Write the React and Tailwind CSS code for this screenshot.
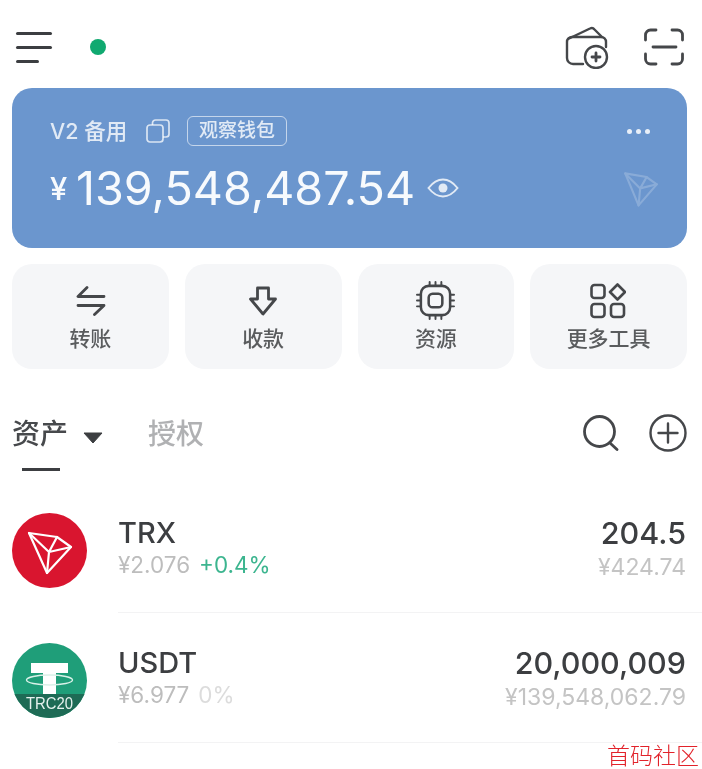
const FONT = { fontFamily: '"Inter","Noto Sans CJK SC",sans-serif' };

const I = "#45474a";

function TronMark({ className, strokeClass, sw }) {
  return (
    <svg viewBox="0 0 42 44" className={className} fill="none" stroke="#fff" strokeWidth={sw} strokeLinejoin="round" strokeLinecap="round">
      <g className={strokeClass}>
        <path d="M1.5 1.5 L28 6 L40.5 15 L18 41 Z" />
        <path d="M1.5 1.5 L20 20 L40.5 15 M20 20 L18 41 M28 6 L20 20" />
      </g>
    </svg>
  );
}

function Transfer() {
  return (
    <svg viewBox="0 0 30 30" className="ml-[2px] w-[30px] h-[30px]" fill="none" stroke={I} strokeWidth="2.8" strokeLinecap="round" strokeLinejoin="round">
      <path d="M11 1.5 L2 10.5 H28" />
      <path d="M2 19.5 H28 L18.5 28.5" />
    </svg>
  );
}
function Receive() {
  return (
    <svg viewBox="0 0 30 30" className="w-[30px] h-[30px]" fill="none" stroke={I} strokeWidth="2.8" strokeLinejoin="round">
      <path d="M9.5 2 H20.5 V13 H27.5 L15 28 L2.5 13 H9.5 Z" />
    </svg>
  );
}
function Chip() {
  return (
    <svg viewBox="0 0 40 40" className="w-[39px] h-[39px]" fill="none" stroke={I} strokeLinecap="round">
      <rect x="5" y="5" width="30" height="30" rx="8" strokeWidth="2.6" />
      <rect x="13" y="13" width="14" height="14" rx="4" strokeWidth="2.6" />
      <path strokeWidth="2" d="M14 1 V5 M20 1 V5 M26 1 V5 M14 35 V39 M20 35 V39 M26 35 V39 M1 14 H5 M1 20 H5 M1 26 H5 M35 14 H39 M35 20 H39 M35 26 H39" />
    </svg>
  );
}
function Grid() {
  return (
    <svg viewBox="0 0 36 36" className="-ml-[2px] w-[36px] h-[36px]" fill="none" stroke={I} strokeWidth="2.6" strokeLinejoin="round">
      <rect x="1.5" y="2" width="13" height="13" rx="3" />
      <rect x="1.5" y="21" width="13" height="13" rx="3" />
      <rect x="21" y="21" width="13" height="13" rx="3" />
      <path d="M27.5 1.5 L35 9 L27.5 16.5 L20 9 Z" />
    </svg>
  );
}

const actions = [
  { label: "转账", icon: <Transfer /> },
  { label: "收款", icon: <Receive /> },
  { label: "资源", icon: <Chip /> },
  { label: "更多工具", icon: <Grid /> },
];

function TrxLogo() {
  return (
    <svg viewBox="0 0 75 75" className="w-[75px] h-[75px] shrink-0">
      <circle cx="37.5" cy="37.5" r="37.5" fill="#d9152f" />
      <g fill="none" stroke="#fff" strokeWidth="2.2" strokeLinejoin="round" strokeLinecap="round">
        <path d="M17 20 L45 24 L59 34 L35 60 Z" />
        <path d="M17 20 L37 39 L59 34 M37 39 L35 60 M45 24 L37 39" />
      </g>
    </svg>
  );
}

function UsdtLogo() {
  return (
    <svg viewBox="0 0 75 75" className="w-[75px] h-[75px] shrink-0">
      <defs>
        <clipPath id="usdt-c"><circle cx="37.5" cy="37.5" r="37.5" /></clipPath>
      </defs>
      <g clipPath="url(#usdt-c)">
        <rect width="75" height="75" fill="#1f9e79" />
        <path d="M19 20 H56 V30 H44 V51 H31 V30 H19 Z" fill="#fff" />
        <ellipse cx="37.5" cy="37" rx="23" ry="5" fill="none" stroke="#d9f1e8" strokeWidth="1.4" />
        <rect y="51" width="75" height="24" fill="#1e6b55" />
        <text x="37.5" y="66" textAnchor="middle" fill="#e6f2ee" fontSize="17" textLength="47" lengthAdjust="spacingAndGlyphs" fontFamily="Liberation Sans, sans-serif">TRC20</text>
      </g>
    </svg>
  );
}

function Row({ logo, name, price, change, changeClass, amount, value }) {
  return (
    <div className="flex h-[130px]">
      <div className="pl-3 pt-[30px] w-[118px] shrink-0">{logo}</div>
      <div className="flex-1 border-b border-[#f3f3f4] pt-[31px] pr-4 flex justify-between">
        <div>
          <div className="text-[29px] leading-[38px] font-medium text-[#3c3e41]">{name}</div>
          <div className="text-[22.5px] leading-[28px] text-[#bdbdbd] -mt-[1px]">
            {price}<span className={`ml-[9px] ${changeClass}`}>{change}</span>
          </div>
        </div>
        <div className="text-right">
          <div className="text-[30.5px] leading-[38px] font-medium text-[#3c3e41]">{amount}</div>
          <div className="text-[23px] leading-[28px] text-[#c4c4c4] mt-[1px]">{value}</div>
        </div>
      </div>
    </div>
  );
}

export default function App() {
  return (
    <div style={FONT} className="relative w-[702px] h-[769px] overflow-hidden bg-white blur-[0.6px]">
      <header className="h-[88px] pl-4 pr-[18px] pt-[6px] flex items-center justify-between">
        <div className="flex items-center">
          <div className="w-[36px] flex flex-col gap-[11px]">
            <div className="h-[3px] w-[36px] rounded-full bg-[#3c3e41]" />
            <div className="h-[3px] w-[36px] rounded-full bg-[#3c3e41]" />
            <div className="h-[3px] w-[23px] rounded-full bg-[#3c3e41]" />
          </div>
          <div className="ml-[38px] w-[16px] h-[16px] rounded-full bg-[#10a970]" />
        </div>
        <div className="flex items-center gap-[34px]">
          <svg viewBox="0 0 46 44" className="w-[46px] h-[44px]" fill="none" stroke={I} strokeWidth="2.4" strokeLinecap="round" strokeLinejoin="round">
            <path d="M19 39 H9 a6 6 0 0 1 -6 -6 V17 a5 5 0 0 1 5 -5 H37 a5 5 0 0 1 5 5 V22" />
            <path d="M4 14 L26 3.5 a3.5 3.5 0 0 1 4.5 1 L38 12" />
            <circle cx="32" cy="32" r="11" />
            <path d="M32 28 V36 M28 32 H36" strokeWidth="2.8" />
          </svg>
          <svg viewBox="0 0 40 38" className="w-[40px] h-[38px]" fill="none" stroke={I} strokeWidth="2.8" strokeLinecap="round">
            <path d="M1.5 12 V7 a5 5 0 0 1 5 -5 H12" />
            <path d="M28 2 H33.5 a5 5 0 0 1 5 5 V12" />
            <path d="M1.5 26 V31 a5 5 0 0 0 5 5 H12" />
            <path d="M28 36 H33.5 a5 5 0 0 0 5 -5 V26" />
            <path d="M9 19 H32" />
          </svg>
        </div>
      </header>

      <section className="mx-3 w-[675px] h-[160px] rounded-[20px] bg-[#6b96ce] pl-[38px] pr-[37px] pt-[28px] text-white">
        <div className="flex items-center h-[30px]">
          <span className="text-[21.5px] leading-[30px] font-medium text-white/80 w-[96px]">V2 备用</span>
          <svg viewBox="0 0 24 24" className="w-[24px] h-[24px]" fill="none" stroke="#fff" strokeOpacity="0.75" strokeWidth="1.7" strokeLinejoin="round">
            <rect x="1" y="6" width="16" height="17" rx="3" />
            <path d="M6.5 6 V4 a3 3 0 0 1 3 -3 H20 a3 3 0 0 1 3 3 V15 a3 3 0 0 1 -3 3 H17" />
          </svg>
          <span className="ml-[17px] w-[100px] h-[30px] rounded-[6px] border border-white/60 flex items-center justify-center text-[19px] font-medium text-white/80">观察钱包</span>
          <div className="ml-auto flex gap-[4px]">
            <span className="w-[5px] h-[5px] rounded-full bg-white/85" />
            <span className="w-[5px] h-[5px] rounded-full bg-white/85" />
            <span className="w-[5px] h-[5px] rounded-full bg-white/85" />
          </div>
        </div>
        <div className="flex items-center h-[56px] mt-[14px]">
          <span className="text-[31px] leading-none font-medium text-white/95 w-[26px]">¥</span>
          <span className="text-[46.7px] leading-none text-white/95">139,548,487.54</span>
          <svg viewBox="0 0 32 20" className="ml-[12px] w-[32px] h-[20px]" fill="none" stroke="#fff" strokeOpacity="0.8" strokeWidth="2">
            <path d="M1.5 10 C7 3 11 1.5 16 1.5 S25 3 30.5 10 C25 17 21 18.5 16 18.5 S7 17 1.5 10 Z" />
            <circle cx="16" cy="10" r="4.5" fill="#fff" fillOpacity="0.8" stroke="none" />
          </svg>
          <TronMark className="ml-auto -mr-[8px] mt-[3px] w-[34px] h-[36px]" strokeClass="opacity-20" sw={2.6} />
        </div>
      </section>

      <div className="mx-3 mt-4 w-[675px] grid grid-cols-4 gap-4">
        {actions.map((a) => (
          <div key={a.label} className="h-[105px] rounded-[20px] bg-[#f5f6f8] flex flex-col items-center pt-[17px]">
            <div className="h-[39px] flex items-center justify-center">{a.icon}</div>
            <div className="mt-[5px] text-[21px] leading-[28px] font-medium text-[#5a5c5e]">{a.label}</div>
          </div>
        ))}
      </div>

      <div className="mt-[41px] pl-3 pr-[15px] h-[50px] flex items-start justify-between">
        <div className="flex items-center h-[48px]">
          <div className="relative">
            <span className="text-[28px] leading-[38px] text-[#47494c] font-medium">资产</span>
            <div className="absolute left-[10px] top-[53px] w-[38px] h-[3px] bg-[#3c3e41]" />
          </div>
          <svg viewBox="0 0 20 12" className="ml-[15px] mt-[7px] w-[20px] h-[12px]"><path d="M1 1 H19 L10 11 Z" fill="#3c3e41" stroke="#3c3e41" strokeLinejoin="round" /></svg>
          <span className="ml-[45px] text-[28px] leading-[38px] text-[#b0b1b3] font-medium">授权</span>
        </div>
        <div className="flex items-center gap-[30px] h-[40px] mt-[3px]">
          <svg viewBox="0 0 36 36" className="w-[36px] h-[36px]" fill="none" stroke={I} strokeWidth="2.8" strokeLinecap="round">
            <circle cx="16.5" cy="16.5" r="15" />
            <path d="M27 28 L34 34.5" />
          </svg>
          <svg viewBox="0 0 38 38" className="w-[38px] h-[38px]" fill="none" stroke={I} strokeWidth="2.4" strokeLinecap="round">
            <circle cx="19" cy="19" r="17.5" />
            <path d="M19 9.5 V28.5 M9.5 19 H28.5" />
          </svg>
        </div>
      </div>

      <div className="mt-[23px]">
        <Row logo={<TrxLogo />} name="TRX" price="¥2.076" change="+0.4%" changeClass="text-[#3cb58f]" amount="204.5" value="¥424.74" />
        <Row logo={<UsdtLogo />} name="USDT" price="¥6.977" change="0%" changeClass="text-[#dcdcdc]" amount="20,000,009" value="¥139,548,062.79" />
      </div>

      <div className="absolute right-[3px] bottom-0 text-[23px] leading-[30px] text-[#e2222a]" style={{ fontFamily: '"Noto Sans CJK SC",serif', fontWeight: 300 }}>首码社区</div>
    </div>
  );
}
